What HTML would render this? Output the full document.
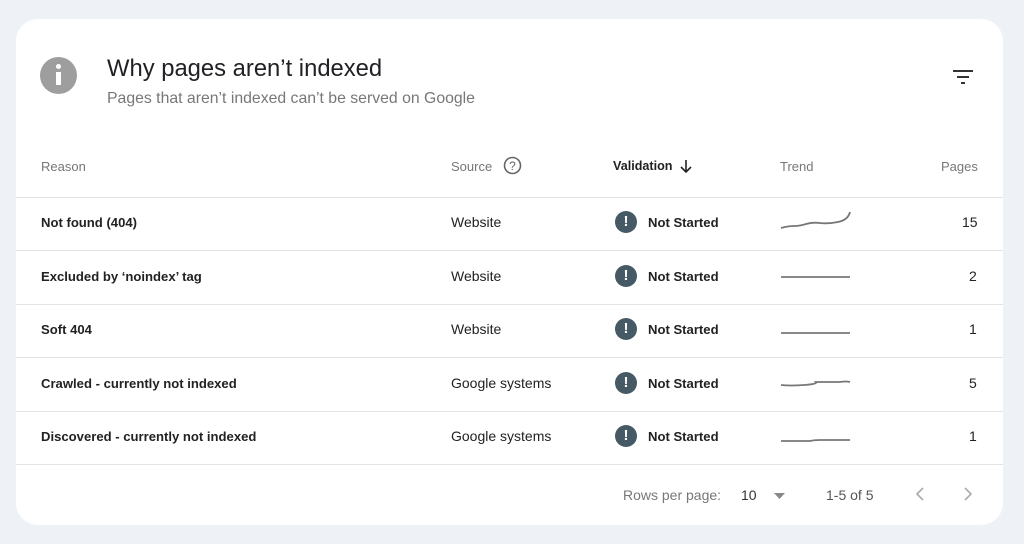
<!DOCTYPE html>
<html><head><style>
*{margin:0;padding:0;box-sizing:border-box}
body{width:1024px;height:544px;background:#eef1f6;font-family:"Liberation Sans",Arial,sans-serif;position:relative;overflow:hidden}
.card{position:absolute;left:16px;top:19px;width:987px;height:506px;background:#fff;border-radius:22px}
.a{position:absolute;white-space:nowrap}
.line{position:absolute;left:16px;width:987px;height:1px;background:#e3e3e3}
.h{font-size:13px;color:#777;top:159px}
.r{font-size:14px;color:#222}
.b{font-weight:bold;font-size:13.1px;padding-top:1px}
.ic{position:absolute;left:615px;width:22px;height:22px;border-radius:50%;background:#455a64;color:#fff;font-weight:bold;font-size:15px;text-align:center;line-height:22px}
</style></head><body>
<div class="card"></div>
<div class="a" style="left:40px;top:57px;width:37px;height:37px;border-radius:50%;background:#9e9e9e"></div>
<div class="a" style="left:56px;top:64px;width:5px;height:5px;border-radius:50%;background:#fff"></div>
<div class="a" style="left:56px;top:72px;width:5px;height:13px;background:#fff"></div>
<div class="a" style="left:107px;top:55px;font-size:23.8px;color:#202124">Why pages aren’t indexed</div>
<div class="a" style="left:107px;top:90px;font-size:15.8px;color:#777">Pages that aren’t indexed can’t be served on Google</div>
<svg class="a" style="left:952px;top:69px" width="24" height="18"><path d="M1 2h20M5 8h12M9 14h4" stroke="#333" stroke-width="2"/></svg>
<div class="a h" style="left:41px">Reason</div>
<div class="a h" style="left:451px">Source</div>
<svg class="a" style="left:503px;top:156px" width="19" height="19"><circle cx="9.5" cy="9.5" r="8" fill="none" stroke="#666" stroke-width="1.6"/><text x="9.5" y="14" font-size="12" text-anchor="middle" fill="#666" font-family="Liberation Sans">?</text></svg>
<div class="a h" style="left:613px;color:#222;font-weight:bold;font-size:12.6px">Validation</div>
<svg class="a" style="left:679px;top:159px" width="14" height="15"><path d="M7 1v12M2 8l5 5 5-5" stroke="#222" stroke-width="1.6" fill="none"/></svg>
<div class="a h" style="left:780px">Trend</div>
<div class="a h" style="left:941px">Pages</div>
<div class="line" style="top:197px"></div>
<div class="line" style="top:250px"></div>
<div class="line" style="top:304px"></div>
<div class="line" style="top:357px"></div>
<div class="line" style="top:411px"></div>
<div class="line" style="top:464px"></div>

<div class="a r b" style="left:41px;top:214px">Not found (404)</div>
<div class="a r" style="left:451px;top:214px">Website</div>
<div class="ic" style="top:211px">!</div><div class="a r b" style="left:648px;top:214px">Not Started</div>
<svg class="a" style="left:780px;top:208px" width="72" height="24"><path d="M1 20 Q8 18 14 18 T26 16 T40 15 T58 14 T70 4" stroke="#777" stroke-width="1.8" fill="none"/></svg>
<div class="a r" style="left:962px;top:214px">15</div>

<div class="a r b" style="left:41px;top:268px">Excluded by ‘noindex’ tag</div>
<div class="a r" style="left:451px;top:268px">Website</div>
<div class="ic" style="top:265px">!</div><div class="a r b" style="left:648px;top:268px">Not Started</div>
<svg class="a" style="left:780px;top:268px" width="72" height="14"><path d="M1 9H70" stroke="#777" stroke-width="1.8"/></svg>
<div class="a r" style="left:969px;top:268px">2</div>

<div class="a r b" style="left:41px;top:321px">Soft 404</div>
<div class="a r" style="left:451px;top:321px">Website</div>
<div class="ic" style="top:318px">!</div><div class="a r b" style="left:648px;top:321px">Not Started</div>
<svg class="a" style="left:780px;top:325px" width="72" height="14"><path d="M1 8H70" stroke="#777" stroke-width="1.8"/></svg>
<div class="a r" style="left:969px;top:321px">1</div>

<div class="a r b" style="left:41px;top:375px">Crawled - currently not indexed</div>
<div class="a r" style="left:451px;top:375px">Google systems</div>
<div class="ic" style="top:372px">!</div><div class="a r b" style="left:648px;top:375px">Not Started</div>
<svg class="a" style="left:780px;top:376px" width="72" height="14"><path d="M1 9 Q10 10 24 9 T36 6 H60 Q66 5 70 6" stroke="#777" stroke-width="1.8" fill="none"/></svg>
<div class="a r" style="left:969px;top:375px">5</div>

<div class="a r b" style="left:41px;top:428px">Discovered - currently not indexed</div>
<div class="a r" style="left:451px;top:428px">Google systems</div>
<div class="ic" style="top:425px">!</div><div class="a r b" style="left:648px;top:428px">Not Started</div>
<svg class="a" style="left:780px;top:432px" width="72" height="14"><path d="M1 9 H30 Q34 8 40 8 H70" stroke="#777" stroke-width="1.8" fill="none"/></svg>
<div class="a r" style="left:969px;top:428px">1</div>

<div class="a" style="left:623px;top:487px;font-size:14px;color:#777">Rows per page:</div>
<div class="a" style="left:741px;top:487px;font-size:14px;color:#333">10</div>
<svg class="a" style="left:773px;top:491px" width="14" height="10"><path d="M1 2h11L6.5 8z" fill="#888"/></svg>
<div class="a" style="left:826px;top:487px;font-size:14px;color:#555">1-5 of 5</div>
<svg class="a" style="left:913px;top:486px" width="14" height="16"><path d="M10 2L4 8l6 6" stroke="#aaa" stroke-width="1.6" fill="none"/></svg>
<svg class="a" style="left:961px;top:486px" width="14" height="16"><path d="M4 2l6 6-6 6" stroke="#aaa" stroke-width="1.6" fill="none"/></svg>
</body></html>
